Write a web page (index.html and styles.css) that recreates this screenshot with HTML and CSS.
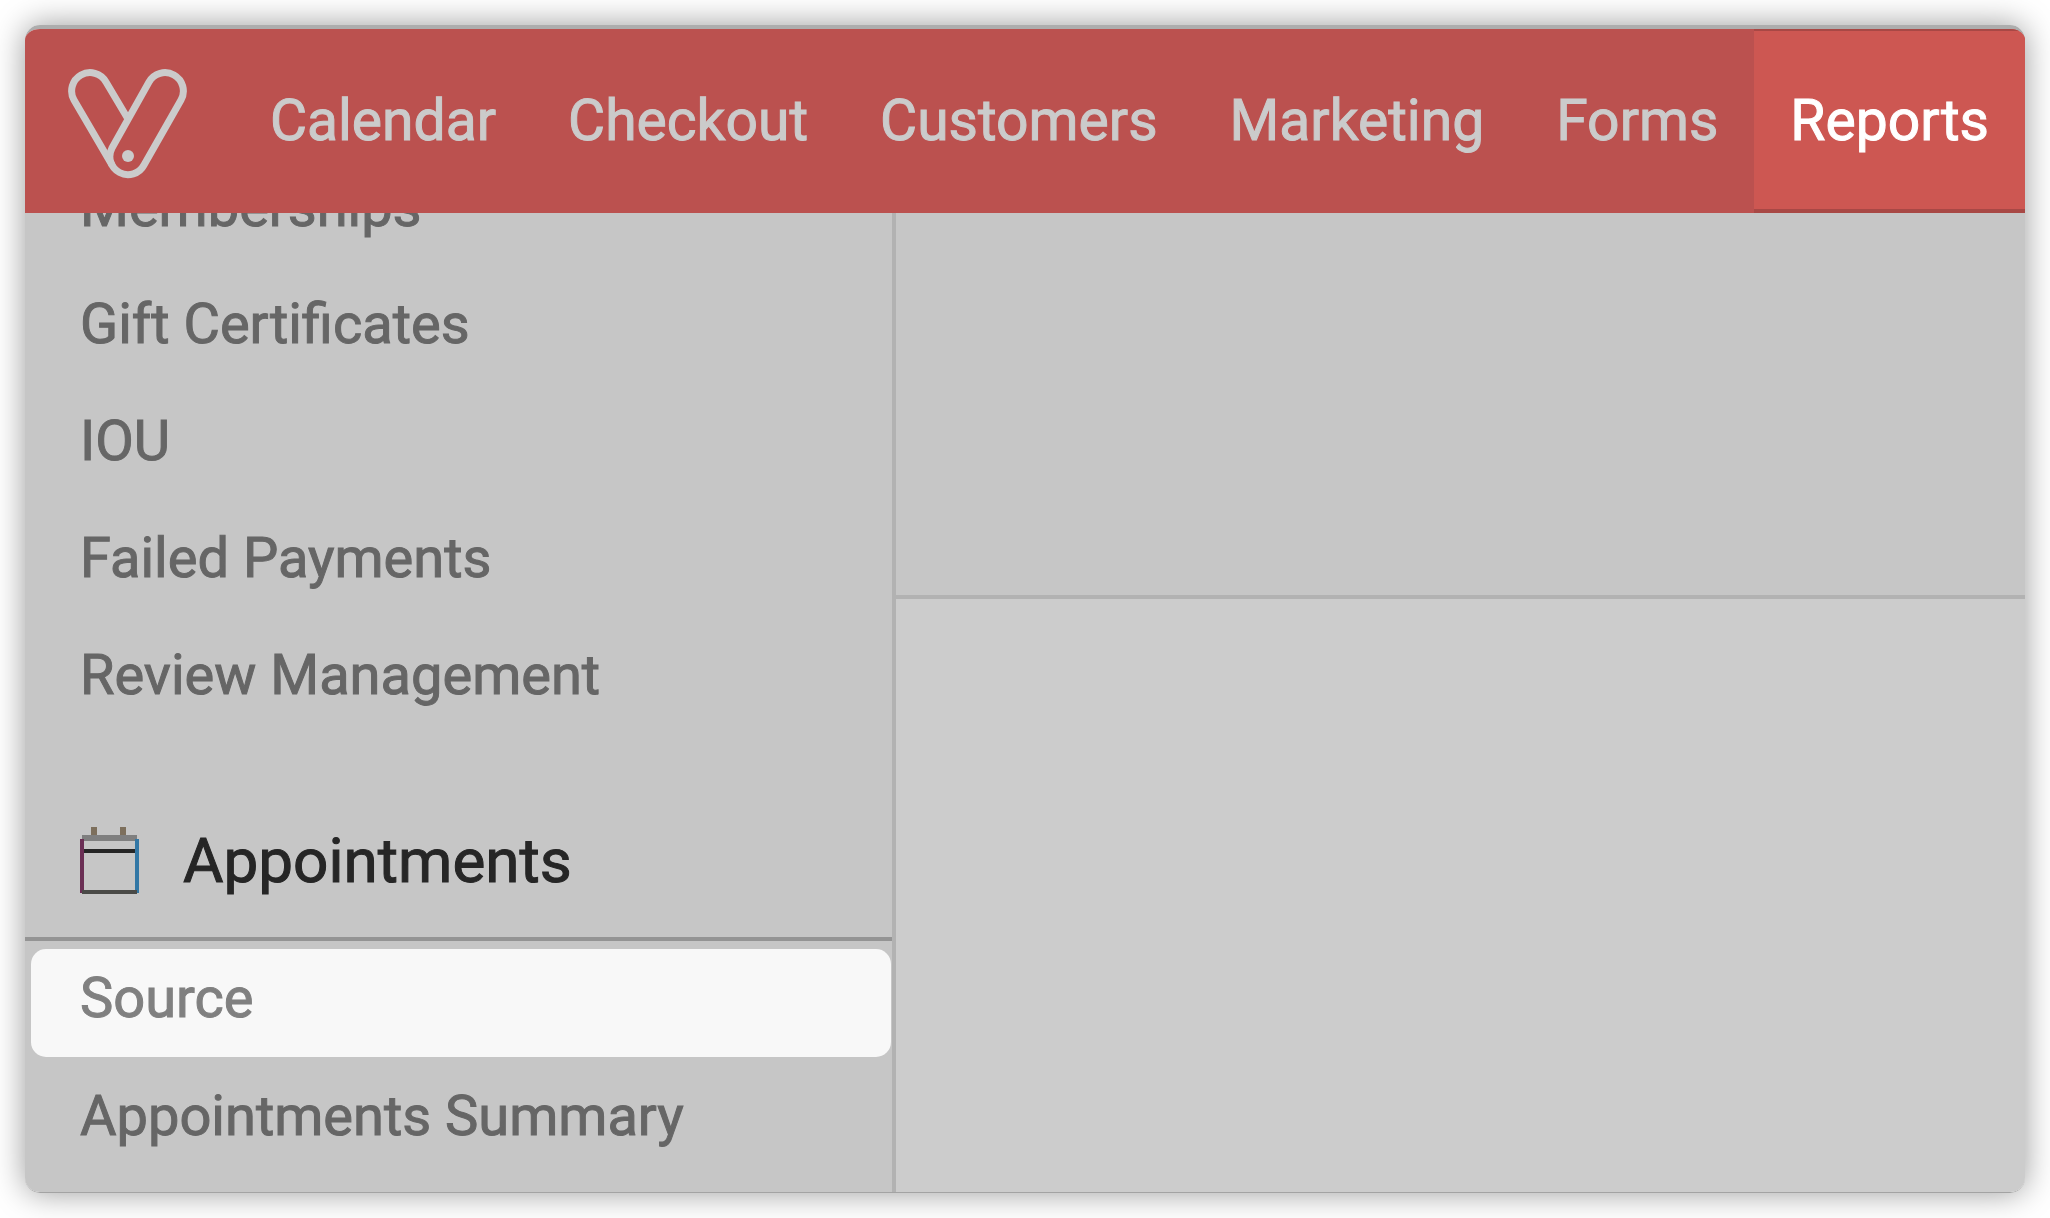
FILE: index.html
```html
<!DOCTYPE html>
<html lang="en">
<head>
    <meta charset="UTF-8">
    <meta name="viewport" content="width=device-width, initial-scale=1.0">
    <title>Reports</title>
    <link rel="stylesheet" href="styles.css">
</head>
<body>
    <div class="window">
        <header class="topbar">
            <a class="logo" href="#" aria-label="Home">
                <svg width="120" height="112" viewBox="68 69 120 112" fill="none" stroke="#cbcbcb" stroke-width="7">
                    <path d="M128 120 L106 83 A18 18 0 0 0 74 101 L112 166"/>
                    <path d="M149 83 A18 18 0 0 1 181 101 L144 166 A18 18 0 0 1 112 149 Z"/>
                    <circle cx="128" cy="157" r="6" fill="#cbcbcb" stroke="none"/>
                </svg>
            </a>
            <nav class="menu">
                <a href="#">Calendar</a>
                <a href="#">Checkout</a>
                <a href="#">Customers</a>
                <a href="#">Marketing</a>
                <a href="#">Forms</a>
                <a href="#" class="current">Reports</a>
            </nav>
        </header>
        <div class="main">
            <aside class="sidebar">
                <ul>
                    <li><a href="#">Memberships</a></li>
                    <li><a href="#">Gift Certificates</a></li>
                    <li><a href="#">IOU</a></li>
                    <li><a href="#">Failed Payments</a></li>
                    <li><a href="#">Review Management</a></li>
                </ul>
                <h2>
                    <svg width="60" height="68" viewBox="0 0 60 68" fill="none">
                        <path d="M14 0 V12 M43 0 V12" stroke="#7d6f5c" stroke-width="6"/>
                        <path d="M2 11 H57" stroke="#7f7f7f" stroke-width="6"/>
                        <path d="M2 12 V66" stroke="#6b2f55" stroke-width="4"/>
                        <path d="M57 12 V66" stroke="#3277a5" stroke-width="4"/>
                        <path d="M4 24 H55" stroke="#262626" stroke-width="4"/>
                        <path d="M2 65 H57" stroke="#4a4a47" stroke-width="4"/>
                    </svg>
                    Appointments
                </h2>
                <ul>
                    <li class="selected"><a href="#">Source</a></li>
                    <li><a href="#">Appointments Summary</a></li>
                </ul>
            </aside>
            <main class="content">
                <div class="content-head"></div>
                <div class="content-body"></div>
            </main>
        </div>
    </div>
</body>
</html>
```
FILE: styles.css
```css
* {
    box-sizing: border-box;
}
body {
    margin: 0;
    padding: 25px;
    height: 100vh;
    background: #fff;
    font-family: Roboto, "Liberation Sans", sans-serif;
    -webkit-text-stroke: 1px;
}
a {
    color: inherit;
    text-decoration: none;
}
.window {
    height: 100%;
    display: flex;
    flex-direction: column;
    border-top: 4px solid #adadad;
    border-bottom: 1px solid #a3a3a3;
    border-radius: 15px;
    overflow: hidden;
    box-shadow: 0 0 32px rgba(0, 0, 0, 0.4);
}

/* top navigation */
.topbar {
    flex: none;
    display: flex;
    height: 184px;
    background: #bb514f;
}
.logo {
    display: flex;
    align-items: center;
    padding: 6px 0 0 43px;
}
.menu {
    flex: 1;
    display: flex;
    justify-content: flex-end;
}
.menu a {
    padding: 0 36px;
    font-size: 57px;
    line-height: 184px;
    color: #cbcbcb;
}
.menu .current {
    background: #cd5752;
    color: #fff;
    box-shadow: inset 0 2px #a84845, inset 0 -4px #a84845;
}

/* reports list */
.main {
    flex: 1;
    min-height: 0;
    display: flex;
}
.sidebar {
    width: 871px;
    flex: none;
    display: flex;
    flex-direction: column;
    justify-content: flex-end;
    overflow: hidden;
    padding-bottom: 17px;
    background: #c6c6c6;
    border-right: 4px solid #b2b2b2;
}
.sidebar ul {
    flex: none;
    margin: 0;
    padding: 0;
    list-style: none;
}
.sidebar li a {
    display: block;
    padding: 10px 55px;
    font-size: 56px;
    line-height: 97px;
    color: #666;
}
.sidebar .selected {
    padding: 8px 1px 1px 6px;
}
.sidebar .selected a {
    padding: 1px 49px 10px;
    border-radius: 15px;
    background: #f8f8f8;
    color: #808080;
}
.sidebar h2 {
    flex: none;
    display: flex;
    align-items: center;
    gap: 43px;
    margin: 0;
    padding: 77px 55px 26px;
    border-bottom: 4px solid #949494;
    font-size: 62px;
    font-weight: 400;
    line-height: 100px;
    color: #262626;
}

.content {
    flex: 1;
    display: flex;
    flex-direction: column;
    background: #ccc;
}
.content-head {
    height: 386px;
    background: #c6c6c6;
    border-bottom: 4px solid #b2b2b2;
}
.content-body {
    flex: 1;
}
```
